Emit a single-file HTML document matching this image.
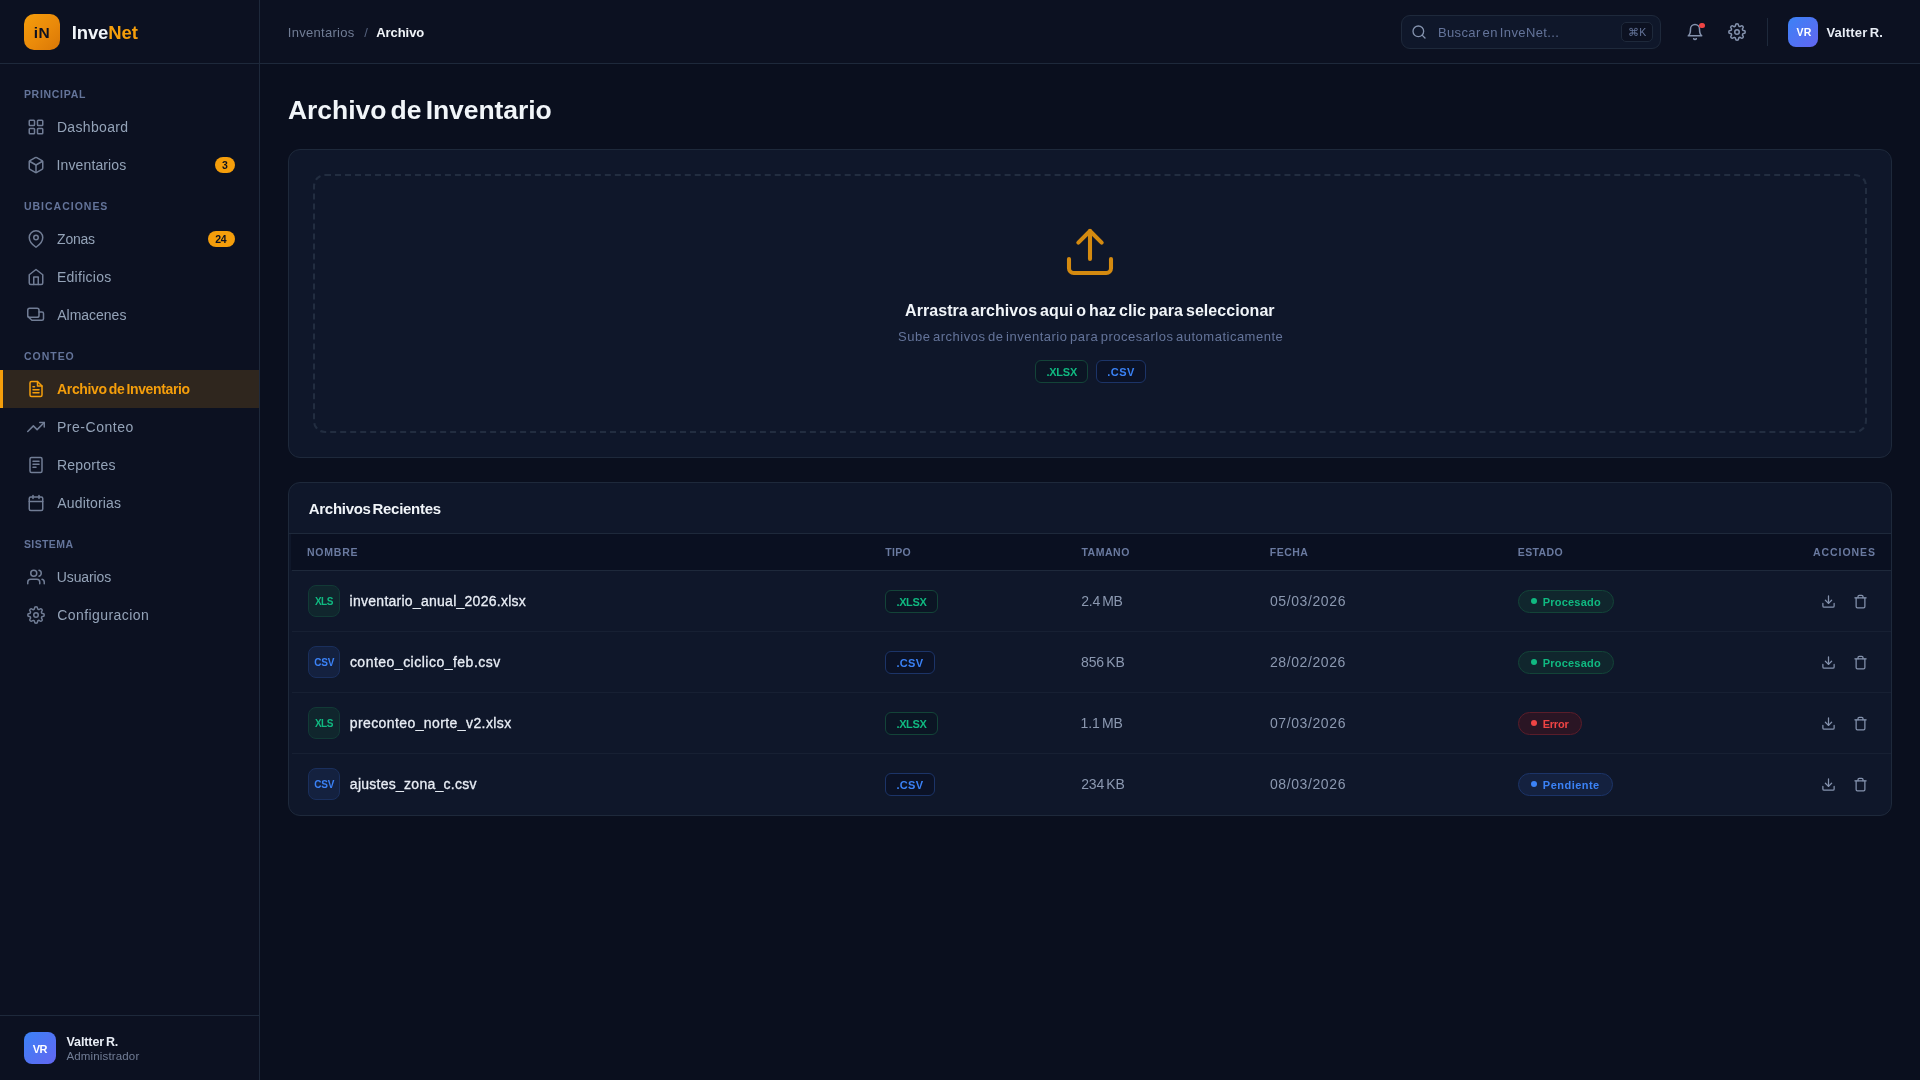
<!DOCTYPE html>
<html lang="es">
<head>
<meta charset="utf-8">
<title>InveNet - Archivo de Inventario</title>
<style>
*{box-sizing:border-box;margin:0;padding:0}
html,body{width:1920px;height:1080px;overflow:hidden}
body{background:#0a0f1e;font-family:"Liberation Sans",sans-serif;color:#e2e8f0}
#wrap{position:absolute;left:0;top:0;width:1920px;height:1080px;will-change:transform}
.bx,.tx,.ic{position:absolute;display:block}
.tx{white-space:pre}
.ic{fill:none;stroke-linecap:round;stroke-linejoin:round}
</style>
</head>
<body>
<div id="wrap">
<div class="bx" style="left:0px;top:0px;width:260px;height:1080px;background:#0c1121;border-right:1px solid #1e293b"></div>
<div class="bx" style="left:0px;top:63px;width:259px;height:1px;background:#1e293b"></div>
<div class="bx" style="left:24px;top:14px;width:36px;height:36px;border-radius:10px;background:linear-gradient(135deg,#f59e0b 0%,#ea8a0a 55%,#d97706 100%)"></div>
<svg class="ic" style="left:27px;top:118px;width:18px;height:18px;stroke:#717d95;stroke-width:2" viewBox="0 0 24 24"><rect x="3" y="3" width="7" height="7" rx="1"/><rect x="14" y="3" width="7" height="7" rx="1"/><rect x="3" y="14" width="7" height="7" rx="1"/><rect x="14" y="14" width="7" height="7" rx="1"/></svg>
<svg class="ic" style="left:27px;top:156px;width:18px;height:18px;stroke:#717d95;stroke-width:2" viewBox="0 0 24 24"><path d="M21 16V8a2 2 0 0 0-1-1.73l-7-4a2 2 0 0 0-2 0l-7 4A2 2 0 0 0 3 8v8a2 2 0 0 0 1 1.73l7 4a2 2 0 0 0 2 0l7-4A2 2 0 0 0 21 16z"/><path d="M3.3 7L12 12l8.7-5"/><path d="M12 22V12"/></svg>
<svg class="ic" style="left:27px;top:230px;width:18px;height:18px;stroke:#717d95;stroke-width:2" viewBox="0 0 24 24"><path d="M21 10c0 7-9 13-9 13s-9-6-9-13a9 9 0 0 1 18 0z"/><circle cx="12" cy="10" r="3"/></svg>
<svg class="ic" style="left:27px;top:268px;width:18px;height:18px;stroke:#717d95;stroke-width:2" viewBox="0 0 24 24"><path d="M3 9l9-7 9 7v11a2 2 0 0 1-2 2H5a2 2 0 0 1-2-2z"/><path d="M9 22V12h6v10"/></svg>
<svg class="ic" style="left:27px;top:306px;width:18px;height:18px;stroke:#717d95;stroke-width:2" viewBox="0 0 24 24"><rect x="1" y="3" width="15" height="12" rx="2.500"/><path d="M16 8h4a2 2 0 0 1 2 2v7a2 2 0 0 1-2 2H6.500L1.600 14.500"/></svg>
<div class="bx" style="left:0px;top:370px;width:259px;height:38px;background:#2f261e"></div>
<div class="bx" style="left:0px;top:370px;width:3px;height:38px;background:#f59e0b"></div>
<svg class="ic" style="left:27px;top:380px;width:18px;height:18px;stroke:#f59e0b;stroke-width:2" viewBox="0 0 24 24"><path d="M14 2H6a2 2 0 0 0-2 2v16a2 2 0 0 0 2 2h12a2 2 0 0 0 2-2V8z"/><path d="M14 2v6h6"/><path d="M16 13H8"/><path d="M16 17H8"/><path d="M10 9H8"/></svg>
<svg class="ic" style="left:27px;top:418px;width:18px;height:18px;stroke:#717d95;stroke-width:2" viewBox="0 0 24 24"><path d="M23 6l-9.500 9.500-5-5L1 18"/><path d="M17 6h6v6"/></svg>
<svg class="ic" style="left:27px;top:456px;width:18px;height:18px;stroke:#717d95;stroke-width:2" viewBox="0 0 24 24"><rect x="4" y="2" width="16" height="20" rx="2"/><path d="M8 7h8"/><path d="M8 11h8"/><path d="M8 15h4"/></svg>
<svg class="ic" style="left:27px;top:494px;width:18px;height:18px;stroke:#717d95;stroke-width:2" viewBox="0 0 24 24"><rect x="3" y="4" width="18" height="18" rx="2"/><path d="M16 2v4"/><path d="M8 2v4"/><path d="M3 10h18"/></svg>
<svg class="ic" style="left:27px;top:568px;width:18px;height:18px;stroke:#717d95;stroke-width:2" viewBox="0 0 24 24"><path d="M17 21v-2a4 4 0 0 0-4-4H5a4 4 0 0 0-4 4v2"/><circle cx="9" cy="7" r="4"/><path d="M23 21v-2a4 4 0 0 0-3-3.870"/><path d="M16 3.130a4 4 0 0 1 0 7.750"/></svg>
<svg class="ic" style="left:27px;top:606px;width:18px;height:18px;stroke:#717d95;stroke-width:2" viewBox="0 0 24 24"><circle cx="12" cy="12" r="3"/><path d="M19.400 15a1.650 1.650 0 0 0 .33 1.820l.06.06a2 2 0 1 1-2.830 2.830l-.06-.06a1.650 1.650 0 0 0-1.820-.33 1.650 1.650 0 0 0-1 1.510V21a2 2 0 0 1-4 0v-.09A1.650 1.650 0 0 0 9 19.400a1.650 1.650 0 0 0-1.820.33l-.06.06a2 2 0 1 1-2.830-2.830l.06-.06a1.650 1.650 0 0 0 .33-1.820 1.650 1.650 0 0 0-1.510-1H3a2 2 0 0 1 0-4h.09A1.650 1.650 0 0 0 4.600 9a1.650 1.650 0 0 0-.33-1.820l-.06-.06a2 2 0 1 1 2.830-2.830l.06.06a1.650 1.650 0 0 0 1.820.33H9a1.650 1.650 0 0 0 1-1.510V3a2 2 0 0 1 4 0v.09a1.650 1.650 0 0 0 1 1.510 1.650 1.650 0 0 0 1.820-.33l.06-.06a2 2 0 1 1 2.830 2.830l-.06.06a1.650 1.650 0 0 0-.33 1.820V9a1.650 1.650 0 0 0 1.510 1H21a2 2 0 0 1 0 4h-.09a1.650 1.650 0 0 0-1.510 1z"/></svg>
<div class="bx" style="left:215px;top:157px;width:20px;height:16px;border-radius:8px;background:#f59e0b"></div>
<div class="bx" style="left:208px;top:231px;width:27px;height:16px;border-radius:8px;background:#f59e0b"></div>
<div class="bx" style="left:0px;top:1015px;width:259px;height:1px;background:#1e293b"></div>
<div class="bx" style="left:24px;top:1032px;width:32px;height:32px;border-radius:8px;background:linear-gradient(135deg,#3b82f6,#6366f1)"></div>
<div class="bx" style="left:260px;top:0px;width:1660px;height:64px;background:#0c1121;border-bottom:1px solid #1e293b"></div>
<div class="bx" style="left:1401px;top:15px;width:260px;height:34px;border:1px solid #1e293b;border-radius:9px;background:#0f172a"></div>
<svg class="ic" style="left:1411px;top:24px;width:16px;height:16px;stroke:#8492ad;stroke-width:2" viewBox="0 0 24 24"><circle cx="11" cy="11" r="8"/><path d="M21 21l-4.350-4.350"/></svg>
<div class="bx" style="left:1621px;top:22px;width:32px;height:20px;border:1px solid #1e293b;border-radius:5px;background:#0c1121"></div>
<svg class="ic" style="left:1686px;top:23px;width:18px;height:18px;stroke:#8492ad;stroke-width:2" viewBox="0 0 24 24"><path d="M18 8A6 6 0 0 0 6 8c0 7-3 9-3 9h18s-3-2-3-9"/><path d="M13.730 21a2 2 0 0 1-3.460 0"/></svg>
<div class="bx" style="left:1699px;top:22.7px;width:5.5px;height:5.5px;border-radius:50%;background:#ef4444"></div>
<svg class="ic" style="left:1728px;top:23px;width:18px;height:18px;stroke:#8492ad;stroke-width:2" viewBox="0 0 24 24"><circle cx="12" cy="12" r="3"/><path d="M19.400 15a1.650 1.650 0 0 0 .33 1.820l.06.06a2 2 0 1 1-2.830 2.830l-.06-.06a1.650 1.650 0 0 0-1.820-.33 1.650 1.650 0 0 0-1 1.510V21a2 2 0 0 1-4 0v-.09A1.650 1.650 0 0 0 9 19.400a1.650 1.650 0 0 0-1.820.33l-.06.06a2 2 0 1 1-2.830-2.830l.06-.06a1.650 1.650 0 0 0 .33-1.820 1.650 1.650 0 0 0-1.510-1H3a2 2 0 0 1 0-4h.09A1.650 1.650 0 0 0 4.600 9a1.650 1.650 0 0 0-.33-1.820l-.06-.06a2 2 0 1 1 2.830-2.830l.06.06a1.650 1.650 0 0 0 1.820.33H9a1.650 1.650 0 0 0 1-1.510V3a2 2 0 0 1 4 0v.09a1.650 1.650 0 0 0 1 1.510 1.650 1.650 0 0 0 1.820-.33l.06-.06a2 2 0 1 1 2.830 2.830l-.06.06a1.650 1.650 0 0 0-.33 1.820V9a1.650 1.650 0 0 0 1.510 1H21a2 2 0 0 1 0 4h-.09a1.650 1.650 0 0 0-1.510 1z"/></svg>
<div class="bx" style="left:1767px;top:18px;width:1px;height:28px;background:#1e293b"></div>
<div class="bx" style="left:1788px;top:17px;width:30px;height:30px;border-radius:8px;background:linear-gradient(135deg,#3b82f6,#6366f1)"></div>
<div class="bx" style="left:288px;top:149px;width:1604px;height:309px;background:#0f172a;border:1px solid #1e293b;border-radius:12px"></div>
<div class="bx" style="left:313px;top:174px;width:1554px;height:259px;border:2px dashed #222d40;border-radius:12px"></div>
<svg class="ic" style="left:1062px;top:224px;width:56px;height:56px;stroke:#d48a10;stroke-width:1.75" viewBox="0 0 24 24"><path d="M21 15v4a2 2 0 0 1-2 2H5a2 2 0 0 1-2-2v-4"/><path d="M17 8l-5-5-5 5"/><path d="M12 3v12"/></svg>
<div class="bx" style="left:1035px;top:360px;width:53px;height:23px;border:1px solid #134438;border-radius:6px;background:#0b1524"></div>
<div class="bx" style="left:1096px;top:360px;width:50px;height:23px;border:1px solid #1c3468;border-radius:6px;background:#0b1226"></div>
<div class="bx" style="left:288px;top:482px;width:1604px;height:334px;background:#0f172a;border:1px solid #1e293b;border-radius:12px"></div>
<div class="bx" style="left:289px;top:533px;width:1602px;height:1px;background:#1e293b"></div>
<div class="bx" style="left:291px;top:534px;width:1600px;height:36px;background:#0a1021"></div>
<div class="bx" style="left:292px;top:570px;width:1599px;height:1px;background:#1e293b"></div>
<div class="bx" style="left:292px;top:631px;width:1599px;height:1px;background:#172033"></div>
<div class="bx" style="left:308px;top:585px;width:32px;height:32px;border:1px solid #123a36;border-radius:8px;background:#10262d"></div>
<div class="bx" style="left:885px;top:590px;width:53px;height:23px;border:1px solid #134438;border-radius:6px;background:#0b1524"></div>
<div class="bx" style="left:1518px;top:590px;width:96px;height:23px;border:1px solid #134438;border-radius:12px;background:#10262d"></div>
<div class="bx" style="left:1531px;top:598px;width:6px;height:6px;border-radius:50%;background:#10b981"></div>
<svg class="ic" style="left:1821px;top:593.5px;width:15px;height:15px;stroke:#8492ad;stroke-width:2" viewBox="0 0 24 24"><path d="M21 15v4a2 2 0 0 1-2 2H5a2 2 0 0 1-2-2v-4"/><path d="M7 10l5 5 5-5"/><path d="M12 15V3"/></svg>
<svg class="ic" style="left:1853px;top:593.5px;width:15px;height:15px;stroke:#8492ad;stroke-width:2" viewBox="0 0 24 24"><path d="M3 6h18"/><path d="M19 6v14a2 2 0 0 1-2 2H7a2 2 0 0 1-2-2V6"/><path d="M8 6V4a2 2 0 0 1 2-2h4a2 2 0 0 1 2 2v2"/></svg>
<div class="bx" style="left:292px;top:692px;width:1599px;height:1px;background:#172033"></div>
<div class="bx" style="left:308px;top:646px;width:32px;height:32px;border:1px solid #1a2f5c;border-radius:8px;background:#14213f"></div>
<div class="bx" style="left:885px;top:651px;width:50px;height:23px;border:1px solid #1c3468;border-radius:6px;background:#0b1226"></div>
<div class="bx" style="left:1518px;top:651px;width:96px;height:23px;border:1px solid #134438;border-radius:12px;background:#10262d"></div>
<div class="bx" style="left:1531px;top:659px;width:6px;height:6px;border-radius:50%;background:#10b981"></div>
<svg class="ic" style="left:1821px;top:654.5px;width:15px;height:15px;stroke:#8492ad;stroke-width:2" viewBox="0 0 24 24"><path d="M21 15v4a2 2 0 0 1-2 2H5a2 2 0 0 1-2-2v-4"/><path d="M7 10l5 5 5-5"/><path d="M12 15V3"/></svg>
<svg class="ic" style="left:1853px;top:654.5px;width:15px;height:15px;stroke:#8492ad;stroke-width:2" viewBox="0 0 24 24"><path d="M3 6h18"/><path d="M19 6v14a2 2 0 0 1-2 2H7a2 2 0 0 1-2-2V6"/><path d="M8 6V4a2 2 0 0 1 2-2h4a2 2 0 0 1 2 2v2"/></svg>
<div class="bx" style="left:292px;top:753px;width:1599px;height:1px;background:#172033"></div>
<div class="bx" style="left:308px;top:707px;width:32px;height:32px;border:1px solid #123a36;border-radius:8px;background:#10262d"></div>
<div class="bx" style="left:885px;top:712px;width:53px;height:23px;border:1px solid #134438;border-radius:6px;background:#0b1524"></div>
<div class="bx" style="left:1518px;top:712px;width:64px;height:23px;border:1px solid #5a1d2a;border-radius:12px;background:#2a1524"></div>
<div class="bx" style="left:1531px;top:720px;width:6px;height:6px;border-radius:50%;background:#ef4444"></div>
<svg class="ic" style="left:1821px;top:715.5px;width:15px;height:15px;stroke:#8492ad;stroke-width:2" viewBox="0 0 24 24"><path d="M21 15v4a2 2 0 0 1-2 2H5a2 2 0 0 1-2-2v-4"/><path d="M7 10l5 5 5-5"/><path d="M12 15V3"/></svg>
<svg class="ic" style="left:1853px;top:715.5px;width:15px;height:15px;stroke:#8492ad;stroke-width:2" viewBox="0 0 24 24"><path d="M3 6h18"/><path d="M19 6v14a2 2 0 0 1-2 2H7a2 2 0 0 1-2-2V6"/><path d="M8 6V4a2 2 0 0 1 2-2h4a2 2 0 0 1 2 2v2"/></svg>
<div class="bx" style="left:308px;top:768px;width:32px;height:32px;border:1px solid #1a2f5c;border-radius:8px;background:#14213f"></div>
<div class="bx" style="left:885px;top:773px;width:50px;height:23px;border:1px solid #1c3468;border-radius:6px;background:#0b1226"></div>
<div class="bx" style="left:1518px;top:773px;width:95px;height:23px;border:1px solid #1c3468;border-radius:12px;background:#14213f"></div>
<div class="bx" style="left:1531px;top:781px;width:6px;height:6px;border-radius:50%;background:#3b82f6"></div>
<svg class="ic" style="left:1821px;top:776.5px;width:15px;height:15px;stroke:#8492ad;stroke-width:2" viewBox="0 0 24 24"><path d="M21 15v4a2 2 0 0 1-2 2H5a2 2 0 0 1-2-2v-4"/><path d="M7 10l5 5 5-5"/><path d="M12 15V3"/></svg>
<svg class="ic" style="left:1853px;top:776.5px;width:15px;height:15px;stroke:#8492ad;stroke-width:2" viewBox="0 0 24 24"><path d="M3 6h18"/><path d="M19 6v14a2 2 0 0 1-2 2H7a2 2 0 0 1-2-2V6"/><path d="M8 6V4a2 2 0 0 1 2-2h4a2 2 0 0 1 2 2v2"/></svg>
<span class="tx" id="logo" style="left:33.80px;top:14px;line-height:38px;font-size:15.5px;color:#0c1121;font-weight:700;letter-spacing:0.38px;">iN</span>
<span class="tx" id="brand" style="left:71.67px;top:21px;line-height:24px;font-size:18.5px;color:#f1f5f9;font-weight:700;letter-spacing:-0.10px;">Inve<b style="color:#f59e0b">Net</b></span>
<span class="tx" id="s1" style="left:23.90px;top:88px;line-height:12px;font-size:10.5px;color:#64749a;font-weight:700;letter-spacing:0.71px;">PRINCIPAL</span>
<span class="tx" id="n1" style="left:56.90px;top:108px;line-height:38px;font-size:14px;color:#94a3b8;letter-spacing:0.34px;">Dashboard</span>
<span class="tx" id="n2" style="left:56.62px;top:146px;line-height:38px;font-size:14px;color:#94a3b8;letter-spacing:0.11px;">Inventarios</span>
<span class="tx" id="s2" style="left:23.98px;top:200px;line-height:12px;font-size:10.5px;color:#64749a;font-weight:700;letter-spacing:0.99px;">UBICACIONES</span>
<span class="tx" id="n3" style="left:57.10px;top:220px;line-height:38px;font-size:14px;color:#94a3b8;letter-spacing:-0.26px;">Zonas</span>
<span class="tx" id="n4" style="left:56.90px;top:258px;line-height:38px;font-size:14px;color:#94a3b8;letter-spacing:0.29px;">Edificios</span>
<span class="tx" id="n5" style="left:57.29px;top:296px;line-height:38px;font-size:14px;color:#94a3b8;letter-spacing:-0.02px;">Almacenes</span>
<span class="tx" id="s3" style="left:23.98px;top:350px;line-height:12px;font-size:10.5px;color:#64749a;font-weight:700;letter-spacing:0.98px;">CONTEO</span>
<span class="tx" id="n6" style="left:57.04px;top:370px;line-height:38px;font-size:14px;color:#f59e0b;font-weight:700;letter-spacing:-0.35px;word-spacing:-1.5px;">Archivo de Inventario</span>
<span class="tx" id="n7" style="left:56.90px;top:408px;line-height:38px;font-size:14px;color:#94a3b8;letter-spacing:0.54px;">Pre-Conteo</span>
<span class="tx" id="n8" style="left:56.90px;top:446px;line-height:38px;font-size:14px;color:#94a3b8;letter-spacing:0.25px;">Reportes</span>
<span class="tx" id="n9" style="left:57.29px;top:484px;line-height:38px;font-size:14px;color:#94a3b8;letter-spacing:0.17px;">Auditorias</span>
<span class="tx" id="s4" style="left:23.91px;top:538px;line-height:12px;font-size:10.5px;color:#64749a;font-weight:700;letter-spacing:0.40px;">SISTEMA</span>
<span class="tx" id="n10" style="left:56.78px;top:558px;line-height:38px;font-size:14px;color:#94a3b8;letter-spacing:-0.10px;">Usuarios</span>
<span class="tx" id="n11" style="left:57.17px;top:596px;line-height:38px;font-size:14px;color:#94a3b8;letter-spacing:0.43px;">Configuracion</span>
<span class="tx" id="b1" style="left:222.06px;top:157px;line-height:16px;font-size:10.5px;color:#0c1121;font-weight:700;">3</span>
<span class="tx" id="b2" style="left:215.16px;top:231px;line-height:16px;font-size:10.5px;color:#0c1121;font-weight:700;letter-spacing:-0.37px;">24</span>
<span class="tx" id="fav" style="left:32.72px;top:1033px;line-height:32px;font-size:11px;color:#ffffff;font-weight:700;letter-spacing:-0.45px;">VR</span>
<span class="tx" id="fname" style="left:66.58px;top:1034px;line-height:16px;font-size:12.5px;color:#e8edf5;font-weight:700;letter-spacing:-0.11px;word-spacing:-1.5px;">Valtter R.</span>
<span class="tx" id="frole" style="left:66.38px;top:1049px;line-height:14px;font-size:11.5px;color:#717d95;letter-spacing:0.16px;">Administrador</span>
<span class="tx" id="bc1" style="left:287.75px;top:25px;line-height:16px;font-size:13px;color:#717d95;letter-spacing:0.30px;">Inventarios</span>
<span class="tx" id="bc2" style="left:364.20px;top:25px;line-height:16px;font-size:13px;color:#55627e;">/</span>
<span class="tx" id="bc3" style="left:376.14px;top:25px;line-height:16px;font-size:13px;color:#f1f5f9;font-weight:700;letter-spacing:-0.04px;">Archivo</span>
<span class="tx" id="sp" style="left:1437.90px;top:25px;line-height:16px;font-size:13px;color:#64749a;letter-spacing:0.38px;word-spacing:-2px;">Buscar en InveNet...</span>
<span class="tx" id="kbd" style="left:1628.26px;top:22px;line-height:20px;font-size:10.5px;color:#64749a;letter-spacing:-0.06px;">&#8984;K</span>
<span class="tx" id="hav" style="left:1796.39px;top:17px;line-height:30px;font-size:10.5px;color:#ffffff;font-weight:700;letter-spacing:0.27px;">VR</span>
<span class="tx" id="hname" style="left:1826.44px;top:25px;line-height:16px;font-size:13px;color:#e8edf5;font-weight:700;letter-spacing:0.18px;word-spacing:-1.5px;">Valtter R.</span>
<span class="tx" id="ttl" style="left:288.04px;top:93px;line-height:34px;font-size:26.5px;color:#f1f5f9;font-weight:700;letter-spacing:-0.06px;word-spacing:-3px;">Archivo de Inventario</span>
<span class="tx" id="dz1" style="left:905.09px;top:300px;line-height:22px;font-size:16px;color:#f1f5f9;font-weight:700;letter-spacing:0.06px;word-spacing:-1.5px;">Arrastra archivos aqui o haz clic para seleccionar</span>
<span class="tx" id="dz2" style="left:898.06px;top:329px;line-height:16px;font-size:13px;color:#64749a;letter-spacing:0.50px;word-spacing:-1.5px;">Sube archivos de inventario para procesarlos automaticamente</span>
<span class="tx" id="dzx" style="left:1046.39px;top:361px;line-height:23px;font-size:11px;color:#10b981;font-weight:700;letter-spacing:-0.22px;">.XLSX</span>
<span class="tx" id="dzc" style="left:1107.34px;top:361px;line-height:23px;font-size:11px;color:#3b82f6;font-weight:700;letter-spacing:0.41px;">.CSV</span>
<span class="tx" id="th" style="left:308.77px;top:500px;line-height:18px;font-size:15px;color:#f1f5f9;font-weight:700;letter-spacing:-0.29px;word-spacing:-2px;">Archivos Recientes</span>
<span class="tx" id="h1" style="left:306.93px;top:546px;line-height:12px;font-size:10.5px;color:#6a7aa0;font-weight:700;letter-spacing:0.79px;">NOMBRE</span>
<span class="tx" id="h2" style="left:885.31px;top:546px;line-height:12px;font-size:10.5px;color:#6a7aa0;font-weight:700;letter-spacing:0.28px;">TIPO</span>
<span class="tx" id="h3" style="left:1081.46px;top:546px;line-height:12px;font-size:10.5px;color:#6a7aa0;font-weight:700;letter-spacing:0.53px;">TAMANO</span>
<span class="tx" id="h4" style="left:1269.85px;top:546px;line-height:12px;font-size:10.5px;color:#6a7aa0;font-weight:700;letter-spacing:0.47px;">FECHA</span>
<span class="tx" id="h5" style="left:1517.85px;top:546px;line-height:12px;font-size:10.5px;color:#6a7aa0;font-weight:700;letter-spacing:0.37px;">ESTADO</span>
<span class="tx" id="h6" style="left:1813.08px;top:546px;line-height:12px;font-size:10.5px;color:#6a7aa0;font-weight:700;letter-spacing:0.92px;">ACCIONES</span>
<span class="tx" id="fi0" style="left:314.94px;top:586px;line-height:32px;font-size:10px;color:#10b981;font-weight:700;letter-spacing:-0.50px;">XLS</span>
<span class="tx" id="fn0" style="left:349.61px;top:571px;line-height:60px;font-size:14px;color:#e8edf5;letter-spacing:0.26px;-webkit-text-stroke:0.3px #e8edf5;">inventario_anual_2026.xlsx</span>
<span class="tx" id="tb0" style="left:896.44px;top:591px;line-height:23px;font-size:11px;color:#10b981;font-weight:700;letter-spacing:-0.36px;">.XLSX</span>
<span class="tx" id="sz0" style="left:1081.15px;top:571px;line-height:60px;font-size:14px;color:#8b98b0;letter-spacing:-0.21px;word-spacing:-1.5px;">2.4 MB</span>
<span class="tx" id="dt0" style="left:1269.96px;top:571px;line-height:60px;font-size:14px;color:#8b98b0;letter-spacing:0.60px;">05/03/2026</span>
<span class="tx" id="st0" style="left:1542.75px;top:591px;line-height:23px;font-size:11px;color:#10b981;font-weight:700;letter-spacing:0.21px;">Procesado</span>
<span class="tx" id="fi1" style="left:314.37px;top:647px;line-height:32px;font-size:10px;color:#3b82f6;font-weight:700;letter-spacing:-0.24px;">CSV</span>
<span class="tx" id="fn1" style="left:349.89px;top:632px;line-height:60px;font-size:14px;color:#e8edf5;letter-spacing:0.49px;-webkit-text-stroke:0.3px #e8edf5;">conteo_ciclico_feb.csv</span>
<span class="tx" id="tb1" style="left:896.48px;top:652px;line-height:23px;font-size:11px;color:#3b82f6;font-weight:700;letter-spacing:0.28px;">.CSV</span>
<span class="tx" id="sz1" style="left:1081.02px;top:632px;line-height:60px;font-size:14px;color:#8b98b0;letter-spacing:-0.13px;word-spacing:-1.5px;">856 KB</span>
<span class="tx" id="dt1" style="left:1269.95px;top:632px;line-height:60px;font-size:14px;color:#8b98b0;letter-spacing:0.60px;">28/02/2026</span>
<span class="tx" id="st1" style="left:1542.75px;top:652px;line-height:23px;font-size:11px;color:#10b981;font-weight:700;letter-spacing:0.21px;">Procesado</span>
<span class="tx" id="fi2" style="left:314.94px;top:708px;line-height:32px;font-size:10px;color:#10b981;font-weight:700;letter-spacing:-0.50px;">XLS</span>
<span class="tx" id="fn2" style="left:349.69px;top:693px;line-height:60px;font-size:14px;color:#e8edf5;letter-spacing:0.41px;-webkit-text-stroke:0.3px #e8edf5;">preconteo_norte_v2.xlsx</span>
<span class="tx" id="tb2" style="left:896.44px;top:713px;line-height:23px;font-size:11px;color:#10b981;font-weight:700;letter-spacing:-0.36px;">.XLSX</span>
<span class="tx" id="sz2" style="left:1080.61px;top:693px;line-height:60px;font-size:14px;color:#8b98b0;letter-spacing:-0.14px;word-spacing:-1.5px;">1.1 MB</span>
<span class="tx" id="dt2" style="left:1269.96px;top:693px;line-height:60px;font-size:14px;color:#8b98b0;letter-spacing:0.60px;">07/03/2026</span>
<span class="tx" id="st2" style="left:1542.69px;top:713px;line-height:23px;font-size:11px;color:#ef4444;font-weight:700;letter-spacing:-0.23px;">Error</span>
<span class="tx" id="fi3" style="left:314.37px;top:769px;line-height:32px;font-size:10px;color:#3b82f6;font-weight:700;letter-spacing:-0.24px;">CSV</span>
<span class="tx" id="fn3" style="left:349.86px;top:754px;line-height:60px;font-size:14px;color:#e8edf5;letter-spacing:0.26px;-webkit-text-stroke:0.3px #e8edf5;">ajustes_zona_c.csv</span>
<span class="tx" id="tb3" style="left:896.48px;top:774px;line-height:23px;font-size:11px;color:#3b82f6;font-weight:700;letter-spacing:0.28px;">.CSV</span>
<span class="tx" id="sz3" style="left:1081.15px;top:754px;line-height:60px;font-size:14px;color:#8b98b0;letter-spacing:-0.15px;word-spacing:-1.5px;">234 KB</span>
<span class="tx" id="dt3" style="left:1269.96px;top:754px;line-height:60px;font-size:14px;color:#8b98b0;letter-spacing:0.60px;">08/03/2026</span>
<span class="tx" id="st3" style="left:1542.83px;top:774px;line-height:23px;font-size:11px;color:#3b82f6;font-weight:700;letter-spacing:0.48px;">Pendiente</span>
</div>
</body>
</html>
